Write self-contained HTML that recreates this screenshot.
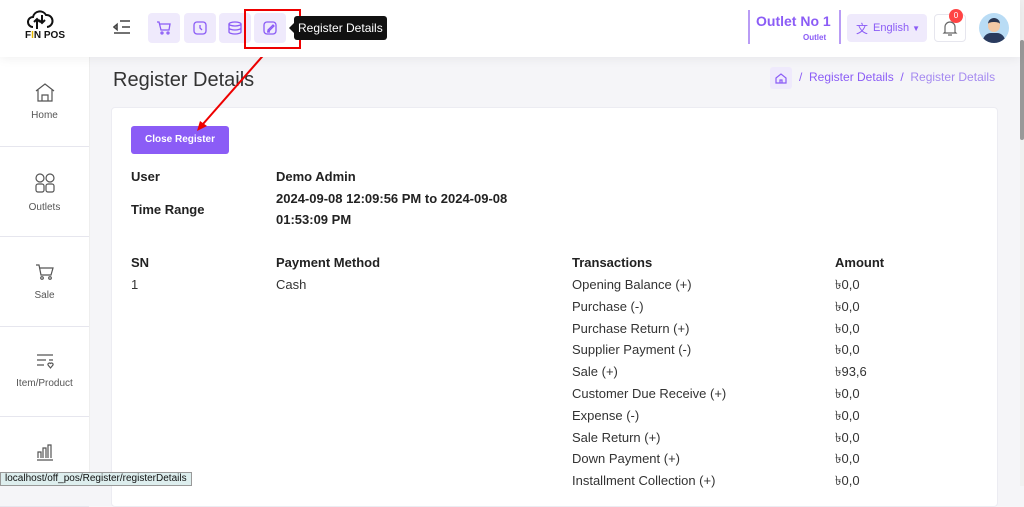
<!DOCTYPE html>
<html><head><style>
*{box-sizing:border-box;margin:0;padding:0}
body{width:1024px;height:486px;overflow:hidden;background:#f5f5f8;font-family:"Liberation Sans",sans-serif;color:#333;position:relative}
.hdr{position:absolute;left:0;top:0;width:1020px;height:57px;background:#fff;box-shadow:0 2px 10px rgba(0,0,0,.06);z-index:2}
.side{position:absolute;left:0;top:57px;width:90px;height:429px;background:#fff;border-right:1px solid #eee}
.si{height:90px;border-bottom:1px solid #e6e6ee;text-align:center;font-size:10px;color:#555;padding-top:25px}
.si svg{display:block;margin:0 auto 8px}
.ib{position:absolute;top:13px;width:32px;height:30px;background:#efeafc;border-radius:4px}
.card{position:absolute;left:111px;top:107px;width:887px;height:400px;background:#fff;border:1px solid #ececf2;border-radius:4px}
.t{position:absolute;font-size:13px;color:#333}
.b{font-weight:bold;color:#222}
</style></head><body>
<div class="hdr">
 <svg style="position:absolute;left:26px;top:9px" width="28" height="22" viewBox="0 0 28 22"><path d="M7 18a5 5 0 0 1 0-10 7 7 0 0 1 13-2 5 5 0 0 1 1 12" fill="none" stroke="#111" stroke-width="2"/><path d="M11 20V10M8 13l3-3 3 3M16 6v8M13 11l3 3 3-3" fill="none" stroke="#111" stroke-width="2"/></svg>
 <div style="position:absolute;left:25px;top:30px;font-size:10px;font-weight:bold;color:#111">F<span style="color:#e6b800">I</span>N POS</div>
 <svg style="position:absolute;left:113px;top:20px" width="18" height="14" viewBox="0 0 18 14" fill="none" stroke="#444" stroke-width="1.6"><path d="M7 1h10M9 7h8M1 13h16M1 7l3-2.5v5z"/></svg>
 <div class="ib" style="left:148px"></div><div class="ib" style="left:184px"></div><div class="ib" style="left:219px"></div><div class="ib" style="left:254px"></div>
 <svg style="position:absolute;left:156px;top:20px" width="16" height="16" viewBox="0 0 16 16" fill="none" stroke="#8b5cf6" stroke-width="1.3"><path d="M1 2h2l2 8h8l1-6H4"/><circle cx="6" cy="13" r="1"/><circle cx="12" cy="13" r="1"/></svg>
 <svg style="position:absolute;left:192px;top:20px" width="16" height="16" viewBox="0 0 16 16" fill="none" stroke="#8b5cf6" stroke-width="1.3"><rect x="2" y="2" width="12" height="12" rx="3"/><path d="M8 5v3l2 2"/></svg>
 <svg style="position:absolute;left:227px;top:20px" width="16" height="16" viewBox="0 0 16 16" fill="none" stroke="#8b5cf6" stroke-width="1.3"><ellipse cx="8" cy="4" rx="6" ry="2"/><path d="M2 8c0 1 3 2 6 2s6-1 6-2M2 12c0 1 3 2 6 2s6-1 6-2M2 4v8M14 4v8"/></svg>
 <svg style="position:absolute;left:262px;top:20px" width="16" height="16" viewBox="0 0 16 16" fill="none" stroke="#8b5cf6" stroke-width="1.3"><rect x="2" y="2" width="12" height="12" rx="3"/><path d="M6 10l5-5 1 1-5 5H6zM5 12h3"/></svg>
 <div style="position:absolute;left:244px;top:9px;width:57px;height:40px;border:2px solid #e00"></div>
 <div style="position:absolute;left:294px;top:16px;width:93px;height:24px;background:#111;border-radius:3px;color:#fff;font-size:12px;line-height:24px;padding-left:4px">Register Details</div>
 <div style="position:absolute;left:289px;top:23px;border:5px solid transparent;border-right-color:#111;border-left:0"></div>
 <div style="position:absolute;left:748px;top:10px;width:2px;height:34px;background:#b99cf5"></div>
 <div style="position:absolute;left:756px;top:13px;font-size:14px;font-weight:bold;color:#8b5cf6">Outlet No 1</div>
 <div style="position:absolute;left:803px;top:33px;font-size:8px;font-weight:bold;color:#8b5cf6">Outlet</div>
 <div style="position:absolute;left:839px;top:10px;width:2px;height:34px;background:#b99cf5"></div>
 <div style="position:absolute;left:847px;top:14px;width:80px;height:28px;background:#efeafc;border-radius:4px;font-size:11px;color:#8b5cf6;line-height:28px;padding-left:26px">English <span style="font-size:8px">▼</span></div>
 <div style="position:absolute;left:856px;top:20px;font-size:12px;color:#8b5cf6">文</div>
 <div style="position:absolute;left:934px;top:14px;width:32px;height:28px;border:1px solid #e6e6ee;border-radius:4px"></div>
 <svg style="position:absolute;left:942px;top:19px" width="16" height="18" viewBox="0 0 16 18" fill="none" stroke="#666" stroke-width="1.2"><path d="M3 13V8a5 5 0 0 1 10 0v5l1 1H2zM6 16h4"/></svg>
 <div style="position:absolute;left:949px;top:9px;width:14px;height:14px;border-radius:7px;background:#f44;color:#fff;font-size:8px;text-align:center;line-height:14px">0</div>
 <div style="position:absolute;left:979px;top:13px;width:30px;height:30px;border-radius:15px;background:#b9dcf5;overflow:hidden"><div style="position:absolute;left:9px;top:5px;width:12px;height:14px;border-radius:6px;background:#f3c9a5;border-top:4px solid #2a3550"></div><div style="position:absolute;left:4px;top:20px;width:22px;height:12px;border-radius:8px 8px 0 0;background:#2a3b5e"></div></div>
</div>
<div style="position:absolute;left:1020px;top:0;width:4px;height:486px;background:#f0f0f0"><div style="width:4px;height:100px;margin-top:40px;background:#999;border-radius:2px"></div></div>
<div class="side">
 <div class="si"><svg width="22" height="20" viewBox="0 0 22 20" fill="none" stroke="#555" stroke-width="1.2"><path d="M2 9l9-7 9 7M4 8v11h14V8M8 19v-6h6v6"/></svg>Home</div>
 <div class="si"><svg width="22" height="22" viewBox="0 0 22 22" fill="none" stroke="#555" stroke-width="1.2"><circle cx="6" cy="6" r="4"/><circle cx="16" cy="6" r="4"/><rect x="2" y="12" width="8" height="8" rx="2"/><rect x="12" y="12" width="8" height="8" rx="2"/></svg>Outlets</div>
 <div class="si"><svg width="20" height="20" viewBox="0 0 20 20" fill="none" stroke="#555" stroke-width="1.2"><path d="M1 3h3l2 10h10l2-7H5"/><circle cx="7" cy="16" r="1.3"/><circle cx="15" cy="16" r="1.3"/></svg>Sale</div>
 <div class="si"><svg width="20" height="18" viewBox="0 0 20 18" fill="none" stroke="#555" stroke-width="1.2"><path d="M2 3h16M2 8h9M2 13h7M14 8h4M13 13l2.5 3 2.5-3a1.5 1.5 0 0 0-2.5-1.5 1.5 1.5 0 0 0-2.5 1.5"/></svg>Item/Product</div>
 <div class="si"><svg width="20" height="20" viewBox="0 0 20 20" fill="none" stroke="#555" stroke-width="1.2"><path d="M2 18h16M3 16V10h3v6M8 16V6h3v10M13 16V3h3v13"/></svg></div>
</div>
<div style="position:absolute;left:113px;top:69px;font-size:20px;color:#333">Register Details</div>
<div style="position:absolute;left:770px;top:67px;width:22px;height:22px;background:#efeafc;border-radius:3px"></div>
<svg style="position:absolute;left:775px;top:72px" width="12" height="12" viewBox="0 0 12 12" fill="none" stroke="#8b5cf6" stroke-width="1.2"><path d="M1 6l5-4 5 4v5H1zM5 11V8h2v3"/></svg>
<div style="position:absolute;left:799px;top:70px;font-size:12px;color:#8b5cf6;white-space:nowrap">/&nbsp; Register Details &nbsp;/&nbsp; <span style="color:#a58af0">Register Details</span></div>
<div class="card"></div>
<div style="position:absolute;left:131px;top:126px;width:98px;height:28px;background:#8b5cf6;border-radius:3px;color:#fff;font-size:10px;font-weight:bold;line-height:28px;text-align:center">Close Register</div>
<svg style="position:absolute;left:0;top:0" width="1024" height="486"><path d="M268 50L203 124" stroke="#e00" stroke-width="2"/><path d="M197 131l3-10 7 5z" fill="#e00"/></svg>
<div class="t b" style="left:131px;top:169px">User</div>
<div class="t b" style="left:276px;top:169px">Demo Admin</div>
<div class="t b" style="left:131px;top:202px">Time Range</div>
<div class="t b" style="left:276px;top:188px;line-height:21px">2024-09-08 12:09:56 PM to 2024-09-08<br>01:53:09 PM</div>
<div class="t b" style="left:131px;top:255px">SN</div>
<div class="t b" style="left:276px;top:255px">Payment Method</div>
<div class="t b" style="left:572px;top:255px">Transactions</div>
<div class="t b" style="left:835px;top:255px">Amount</div>
<div class="t" style="left:131px;top:277px">1</div>
<div class="t" style="left:276px;top:277px">Cash</div>
<div class="t" style="left:572px;top:274px;line-height:21.8px">Opening Balance (+)<br>Purchase (-)<br>Purchase Return (+)<br>Supplier Payment (-)<br>Sale (+)<br>Customer Due Receive (+)<br>Expense (-)<br>Sale Return (+)<br>Down Payment (+)<br>Installment Collection (+)</div>
<div class="t" style="left:835px;top:274px;line-height:21.8px">৳0,0<br>৳0,0<br>৳0,0<br>৳0,0<br>৳93,6<br>৳0,0<br>৳0,0<br>৳0,0<br>৳0,0<br>৳0,0</div>
<div style="position:absolute;left:0;top:472px;height:14px;padding:0 4px;background:#ddeeee;border:1px solid #999;font-size:10px;line-height:12px;color:#111">localhost/off_pos/Register/registerDetails</div>
</body></html>
